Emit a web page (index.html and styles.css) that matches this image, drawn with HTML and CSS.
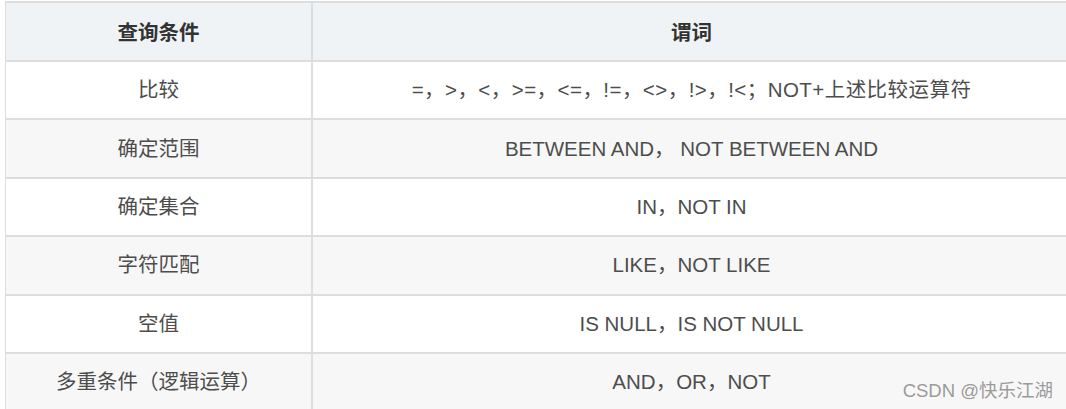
FILE: index.html
```html
<!DOCTYPE html>
<html lang="zh-CN">
<head>
<meta charset="utf-8">
<title>查询条件与谓词</title>
<link rel="stylesheet" href="styles.css">
</head>
<body>
<div class="page">
  <table class="grid">
    <thead>
      <tr class="head-row">
        <th class="c1">查询条件</th>
        <th class="c2">谓词</th>
      </tr>
    </thead>
    <tbody>
      <tr><td class="c1">比较</td><td class="c2 ops">=，&gt;，&lt;，&gt;=，&lt;=，!=，&lt;&gt;，!&gt;，!&lt;；NOT+上述比较运算符</td></tr>
      <tr class="alt"><td class="c1">确定范围</td><td class="c2">BETWEEN AND， NOT BETWEEN AND</td></tr>
      <tr><td class="c1">确定集合</td><td class="c2">IN，NOT IN</td></tr>
      <tr class="alt"><td class="c1">字符匹配</td><td class="c2">LIKE，NOT LIKE</td></tr>
      <tr><td class="c1">空值</td><td class="c2">IS NULL，IS NOT NULL</td></tr>
      <tr class="alt"><td class="c1">多重条件（逻辑运算）</td><td class="c2">AND，OR，NOT</td></tr>
    </tbody>
  </table>
  <div class="watermark">CSDN @快乐江湖</div>
</div>
</body>
</html>
```

FILE: styles.css
```css
html, body {
  margin: 0;
  padding: 0;
  overflow: hidden;
  background: #ffffff;
}
.page {
  position: relative;
  width: 1066px;
  height: 409px;
  overflow: hidden;
  padding: 1px 0 0 5px;
  box-sizing: border-box;
  font-family: "Liberation Sans", "Noto Sans CJK SC", sans-serif;
  color: #4d4d4d;
}
.grid {
  border-collapse: separate;
  border-spacing: 0;
  border-top: 2px solid #dddddd;
  border-left: 1px solid #dddddd;
  width: 1065px;
  table-layout: fixed;
  font-size: 20.5px;
}
.grid th, .grid td {
  padding: 0 0 4px 0;
  text-align: center;
  vertical-align: middle;
  border-bottom: 2px solid #dddddd;
  box-sizing: border-box;
  white-space: nowrap;
}
.grid .c1 {
  width: 307px;
  border-right: 2px solid #dddddd;
}
.head-row th {
  height: 59px;
  padding-bottom: 2px;
  background: #eff3f6;
  color: #333333;
  font-weight: bold;
}
.grid td {
  height: 58.4px;
}
.grid td.ops {
  letter-spacing: 0.45px;
}
.grid tr.alt td {
  background: #f7f7f7;
}
.watermark {
  position: absolute;
  right: 13px;
  bottom: 7px;
  font-size: 18.5px;
  color: #9a9a9a;
  text-shadow: 0 0 1px rgba(255,255,255,0.9);
}
```
